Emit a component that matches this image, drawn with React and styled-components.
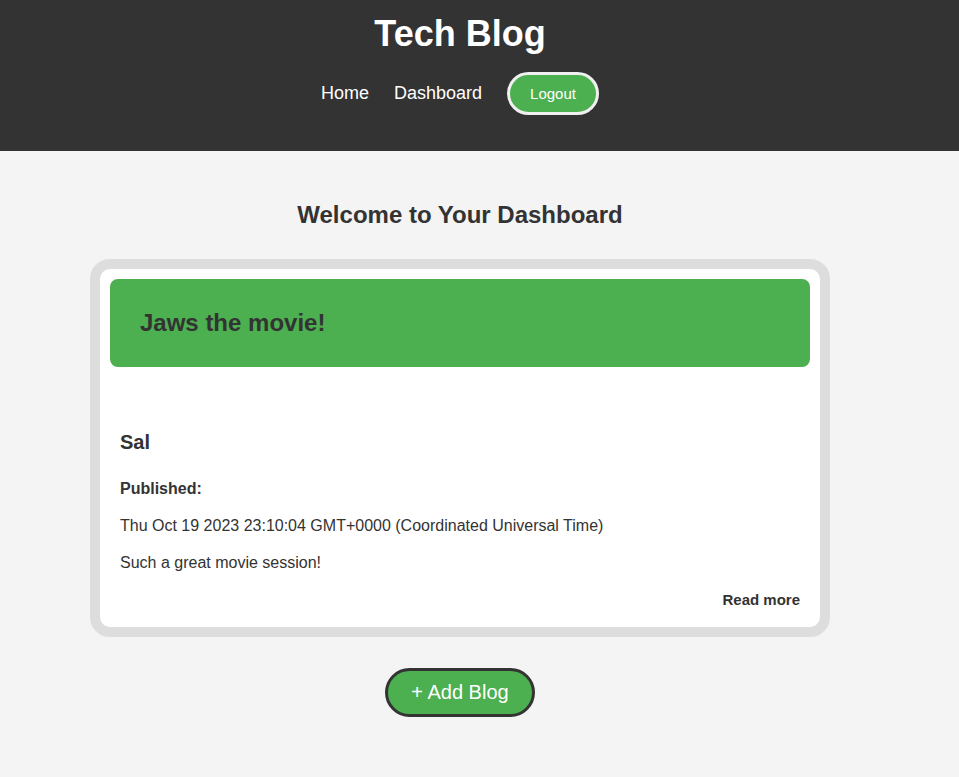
import React from "react";
import styled, { createGlobalStyle } from "styled-components";

const GlobalStyle = createGlobalStyle`
  html, body {
    margin: 0;
    padding: 0;
    background: #f4f4f4;
    font-family: "Liberation Sans", Arial, sans-serif;
    color: #333;
  }
  * { box-sizing: border-box; }
`;

const Header = styled.header`
  background: #333333;
  padding: 13px 39px 36px 0;
  display: flex;
  flex-direction: column;
  align-items: center;
  gap: 18px;
`;

const SiteTitle = styled.h1`
  margin: 0;
  font-size: 36px;
  line-height: 41px;
  font-weight: 700;
  color: #ffffff;
`;

const Nav = styled.nav`
  display: flex;
  align-items: center;
  gap: 25px;
  height: 43px;
`;

const NavLink = styled.a`
  color: #ffffff;
  font-size: 18px;
  line-height: 21px;
  text-decoration: none;
`;

const PillButton = styled.button`
  font-family: "Liberation Sans", Arial, sans-serif;
  background: #4caf50;
  color: #ffffff;
  border: 3px solid ${(p) => p.$borderColor};
  border-radius: 25px;
  font-size: ${(p) => p.$size}px;
  line-height: ${(p) => p.$lh}px;
  padding: 10px ${(p) => p.$px}px;
  cursor: pointer;
`;

const Main = styled.main`
  display: flex;
  flex-direction: column;
  align-items: center;
  padding: 50px 39px 60px 0;
`;

const PageHeading = styled.h2`
  margin: 0 0 30px;
  font-size: 24px;
  line-height: 28px;
  font-weight: 700;
  color: #333;
`;

const Card = styled.article`
  width: 740px;
  background: #ffffff;
  border: 10px solid #dddddd;
  border-radius: 20px;
  padding: 10px;
  margin-bottom: 31px;
`;

const CardHeader = styled.div`
  background: #4caf50;
  border-radius: 8px;
  padding: 30px;
`;

const CardTitle = styled.h2`
  margin: 0;
  font-size: 24px;
  line-height: 28px;
  font-weight: 700;
  color: #333;
`;

const CardBody = styled.div`
  padding: 63px 10px 8px;
  display: flex;
  flex-direction: column;
`;

const Author = styled.h3`
  margin: 0 0 25px;
  font-size: 20px;
  line-height: 24px;
  font-weight: 700;
  color: #333;
`;

const Line = styled.p`
  margin: 0 0 ${(p) => p.$mb}px;
  font-size: 16px;
  line-height: 20px;
  font-weight: ${(p) => (p.$bold ? 700 : 400)};
  color: #333;
`;

const ReadMore = styled.a`
  align-self: flex-end;
  font-size: 15px;
  line-height: 18px;
  font-weight: 700;
  color: #333;
  text-decoration: none;
`;

export default function App() {
  return (
    <>
      <GlobalStyle />
      <Header>
        <SiteTitle>Tech Blog</SiteTitle>
        <Nav>
          <NavLink href="#">Home</NavLink>
          <NavLink href="#">Dashboard</NavLink>
          <PillButton $borderColor="#f0f0f0" $size={15} $lh={17} $px={20}>
            Logout
          </PillButton>
        </Nav>
      </Header>
      <Main>
        <PageHeading>Welcome to Your Dashboard</PageHeading>
        <Card>
          <CardHeader>
            <CardTitle>Jaws the movie!</CardTitle>
          </CardHeader>
          <CardBody>
            <Author>Sal</Author>
            <Line $bold $mb={17}>Published:</Line>
            <Line $mb={17}>Thu Oct 19 2023 23:10:04 GMT+0000 (Coordinated Universal Time)</Line>
            <Line $mb={18}>Such a great movie session!</Line>
            <ReadMore href="#">Read more</ReadMore>
          </CardBody>
        </Card>
        <PillButton $borderColor="#333333" $size={20} $lh={23} $px={23}>
          + Add Blog
        </PillButton>
      </Main>
    </>
  );
}
